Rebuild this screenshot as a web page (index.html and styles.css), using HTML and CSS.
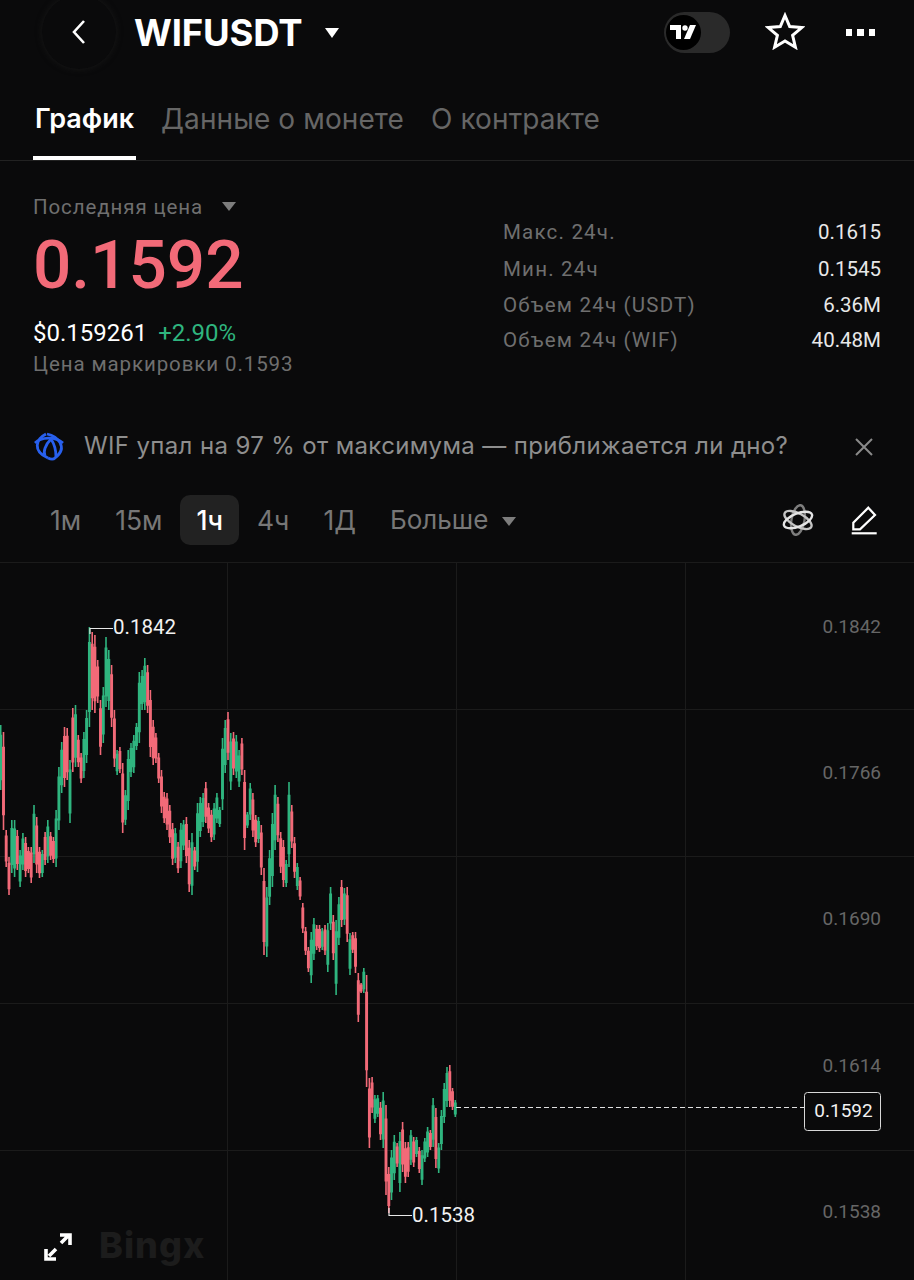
FILE: index.html
```html
<!DOCTYPE html>
<html lang="ru">
  <head>
    <meta charset="UTF-8" />
    <meta name="viewport" content="width=device-width, initial-scale=1.0" />
    <title>WIFUSDT</title>
    <link rel="stylesheet" href="styles.css" />
  </head>
  <body>
    <header class="topbar">
      <div class="back">
        <svg width="16" height="26" viewBox="0 0 16 26"><path d="M13 2 3 13l10 11" fill="none" stroke="#fff" stroke-width="2.6" /></svg>
      </div>
      <h1 class="symbol">WIFUSDT</h1>
      <span class="caret caret-white"></span>
      <div class="topbar-actions">
        <div class="toggle">
          <div class="toggle-knob">
            <svg width="26" height="15" viewBox="0 0 26 15">
              <path d="M0 0h11v14H6V5H0z" fill="#fff" />
              <circle cx="15" cy="3" r="2.7" fill="#fff" />
              <path d="M20 0h6l-6 14h-6z" fill="#fff" />
            </svg>
          </div>
        </div>
        <svg class="star" width="40" height="38" viewBox="0 0 40 38"><path d="M20 3.5 24.7 14.6 36.8 15.6 27.6 23.4 30.4 35.2 20 29 9.6 35.2 12.4 23.4 3.2 15.6 15.3 14.6Z" fill="none" stroke="#fff" stroke-width="3" stroke-linejoin="miter" /></svg>
        <div class="dots"><i></i><i></i><i></i></div>
      </div>
    </header>

    <nav class="tabs">
      <a class="tab tab-active">График</a>
      <a class="tab">Данные о монете</a>
      <a class="tab">О контракте</a>
    </nav>

    <section class="quote">
      <div class="quote-left">
        <div class="last-label">Последняя цена <span class="caret caret-gray"></span></div>
        <div class="last-price">0.1592</div>
        <div class="usd-row"><span class="usd">$0.159261</span> <span class="change">+2.90%</span></div>
        <div class="mark">Цена маркировки 0.1593</div>
      </div>
      <dl class="stats">
        <dt>Макс. 24ч.</dt><dd>0.1615</dd>
        <dt>Мин. 24ч</dt><dd>0.1545</dd>
        <dt>Объем 24ч (USDT)</dt><dd>6.36M</dd>
        <dt>Объем 24ч (WIF)</dt><dd>40.48M</dd>
      </dl>
    </section>

    <section class="news">
      <svg width="34" height="32" viewBox="0 0 34 32" fill="none" stroke="#2860ee" stroke-width="2.8">
        <path d="M13 3C3 8-1 20 15 27" />
        <path d="M14 3C24 5 36 16 22 27 20 29 17 28 15 27" />
        <path d="M2 12C8 6 22 5 30 12" />
        <path d="M18 8C12 14 10 21 12 25" />
        <path d="M18 8C22 14 23 20 23 26" />
      </svg>
      <p class="news-text">WIF упал на 97 % от максимума — приближается ли дно?</p>
      <svg class="news-close" width="20" height="20" viewBox="0 0 20 20"><path d="M2 2l16 16M18 2 2 18" stroke="#8a8a8a" stroke-width="2" /></svg>
    </section>

    <section class="periods">
      <span class="period">1м</span>
      <span class="period">15м</span>
      <span class="period period-active">1ч</span>
      <span class="period">4ч</span>
      <span class="period">1Д</span>
      <span class="period period-more">Больше <span class="caret caret-gray"></span></span>
      <div class="period-tools">
        <svg width="32" height="32" viewBox="0 0 32 32" fill="none" stroke-width="2.4">
          <ellipse cx="16" cy="16" rx="15" ry="6.5" transform="rotate(100 16 16)" stroke="#7d7d7d" />
          <ellipse cx="16" cy="16" rx="15" ry="6.5" transform="rotate(28 16 16)" stroke="#c4c4c4" />
          <ellipse cx="16" cy="16" rx="15" ry="6.5" transform="rotate(-22 16 16)" stroke="#e4e4e4" />
        </svg>
        <svg width="28" height="30" viewBox="0 0 28 30" fill="none" stroke="#fff" stroke-width="2.2">
          <path d="M18.3 2.7 25 10 10 24.3H3.3v-6.6Z" />
          <path d="M1.7 28.3h25" />
        </svg>
      </div>
    </section>

    <section class="chart">
      <svg id="chart-svg" width="914" height="718" viewBox="0 562 914 718">
        <path class="grid" d="M0 562.5H914M0 709.5H914M0 856.5H914M0 1003.5H914M0 1150.5H914M227.5 562V1280M456.5 562V1280M685.5 562V1280" />
        <g id="candles"></g>
        <path class="marker" d="M90 634V628.5H113" />
        <path class="marker" d="M389 1208V1215.5H412" />
        <text class="mark-label" x="113" y="634">0.1842</text>
        <text class="mark-label" x="412" y="1222">0.1538</text>
        <text class="axis-label" x="881" y="633">0.1842</text>
        <text class="axis-label" x="881" y="779">0.1766</text>
        <text class="axis-label" x="881" y="925">0.1690</text>
        <text class="axis-label" x="881" y="1072">0.1614</text>
        <text class="axis-label" x="881" y="1218">0.1538</text>
        <path class="last-line" d="M456 1107.5H804" />
        <rect class="last-box" x="804.5" y="1092.5" width="76" height="38" rx="3" />
        <text class="last-text" x="843.5" y="1117">0.1592</text>
        <path class="expand" d="M49 1256 56 1249M61 1243 68 1236M60 1235H70V1245M46 1249V1259H56" />
        <text class="watermark" x="99" y="1258">Bingx</text>
      </svg>
    </section>

    <script src="chart.js"></script>
  </body>
</html>
```

FILE: styles.css
```css
* {
  box-sizing: border-box;
  font-family: "Inter", "Liberation Sans", sans-serif;
}
html,
body {
  margin: 0;
  padding: 0;
  background-color: #0a0a0b;
  color: #fff;
  overflow: hidden;
}
body {
  width: 914px;
  height: 1280px;
}

.caret {
  display: inline-block;
  width: 0;
  height: 0;
  border-left: 7.5px solid transparent;
  border-right: 7.5px solid transparent;
  border-top: 10px solid #fff;
}
.caret-gray {
  border-left-width: 7px;
  border-right-width: 7px;
  border-top: 9px solid #7d7d7d;
  margin-left: 6px;
  vertical-align: 3px;
}

/* top bar */
.topbar {
  display: flex;
  align-items: center;
  height: 65px;
  padding-left: 42px;
}
.back {
  width: 74px;
  height: 74px;
  margin-top: -2px;
  margin-right: 18px;
  border-radius: 50%;
  box-shadow: 0 0 6px #181818;
  display: flex;
  align-items: center;
  justify-content: center;
}
.symbol {
  margin: 0 23px 0 0;
  font-size: 36.5px;
  font-weight: 700;
  letter-spacing: -0.2px;
}
.topbar-actions {
  margin-left: auto;
  display: flex;
  align-items: center;
  padding-right: 39px;
}
.toggle {
  width: 66px;
  height: 41px;
  border-radius: 21px;
  background-color: #2a2a2a;
  padding: 3px 2px;
  margin-right: 35px;
}
.toggle-knob {
  width: 35px;
  height: 35px;
  border-radius: 50%;
  background-color: #000;
  display: flex;
  align-items: center;
  justify-content: center;
}
.star {
  margin-right: 41px;
  margin-top: -3px;
}
.dots {
  display: flex;
  gap: 5px;
}
.dots i {
  width: 6.5px;
  height: 6.5px;
  background-color: #fff;
}

/* tabs */
.tabs {
  display: flex;
  gap: 25px;
  height: 96px;
  padding-left: 33px;
  border-bottom: 1px solid #222;
  align-items: flex-end;
}
.tab {
  font-size: 28px;
  letter-spacing: 0.1px;
  color: #666;
  height: 72px;
  line-height: 62px;
  padding: 0 1px;
}
.tab-active {
  color: #fff;
  font-size: 27px;
  font-weight: 600;
  letter-spacing: 0;
  padding: 0 2px;
  margin-right: -1px;
  border-bottom: 4px solid #fff;
}

/* quote */
.quote {
  display: flex;
  justify-content: space-between;
  padding: 34px 33px 0 33px;
  height: 252px;
}
.last-label {
  font-family: "Roboto", sans-serif;
  font-size: 20.5px;
  color: #6f6f6f;
  letter-spacing: 0.9px;
  line-height: 24px;
}
.last-label .caret {
  margin-left: 13px;
}
.last-price {
  font-family: "Roboto", sans-serif;
  font-size: 67.5px;
  font-weight: 500;
  color: #f26a78;
  line-height: 78px;
  margin-top: 7px;
}
.usd-row {
  font-family: "Roboto", sans-serif;
  font-size: 24px;
  line-height: 28px;
  margin-top: 15px;
}
.usd,
.change {
  font-family: inherit;
}
.change {
  color: #2fb57f;
  margin-left: 5px;
}
.mark {
  font-family: "Roboto", sans-serif;
  font-size: 20.5px;
  color: #6f6f6f;
  letter-spacing: 0.9px;
  line-height: 26px;
  margin-top: 4px;
}
.stats {
  display: grid;
  grid-template-columns: 1fr auto;
  grid-template-rows: 37px 37px 35px 36px;
  width: 378px;
  margin: 18px 0 0;
  font-size: 20.5px;
  align-items: center;
}
.stats dt {
  font-family: "Roboto", sans-serif;
  color: #6f6f6f;
  letter-spacing: 1.2px;
}
.stats dd {
  font-family: "Roboto", sans-serif;
  margin: 0;
  text-align: right;
  color: #e8e8e8;
}

/* news strip */
.news {
  display: flex;
  align-items: center;
  height: 70px;
  margin-top: -1px;
  padding: 0 40px 0 33px;
}
.news-text {
  margin: 0 0 4px 17px;
  font-size: 24px;
  letter-spacing: 0.36px;
  color: #8e8e8e;
  white-space: nowrap;
}
.news-close {
  margin-left: auto;
}

/* period selector */
.periods {
  display: flex;
  align-items: center;
  height: 81px;
  padding: 0 36px 4px 34px;
  gap: 2px;
  border-bottom: 1px solid #1d1d1d;
}
.period {
  font-size: 26.5px;
  color: #777;
  padding: 0 16px;
  height: 50px;
  line-height: 50px;
  border-radius: 10px;
}
.period-more {
  font-size: 26px;
}
.period-active {
  color: #fff;
  font-weight: 500;
  background-color: #222;
}
.period-tools {
  margin-left: auto;
  display: flex;
  align-items: center;
  gap: 36px;
}

/* chart */
.chart {
  margin-top: -1px;
}
#chart-svg {
  display: block;
}
.grid {
  stroke: #1b1b1b;
  stroke-width: 1;
  fill: none;
}
.marker {
  stroke: #e8e8e8;
  stroke-width: 1.2;
  fill: none;
}
.mark-label,
.axis-label,
.last-text {
  font-family: "Roboto", sans-serif;
}
.mark-label {
  font-size: 20.5px;
  fill: #f2f2f2;
}
.axis-label {
  font-size: 19px;
  fill: #666;
  text-anchor: end;
}
.last-line {
  stroke: #e0e0e0;
  stroke-width: 1;
  stroke-dasharray: 5 3;
}
.last-box {
  fill: #0a0a0b;
  stroke: #d8d8d8;
  stroke-width: 1;
}
.last-text {
  font-size: 19px;
  fill: #f2f2f2;
  text-anchor: middle;
}
.expand {
  stroke: #fff;
  stroke-width: 3.6;
  fill: none;
}
.watermark {
  font-size: 36px;
  font-weight: 800;
  fill: #1c1c1c;
  letter-spacing: 1px;
}
.wick-g,
.body-g {
  stroke: #2fb57f;
}
.wick-r,
.body-r {
  stroke: #f26a78;
}
.wick-g,
.wick-r {
  stroke-width: 1.6;
}
.body-g,
.body-r {
  stroke-width: 2.9;
}
```

FILE: chart.js
```javascript
// colour + wick top,bottom in page pixels, oldest first
const data = `g725,790 r732,830 r830,867 r857,895 g820,873 g820,877 r830,870 g850,887 g833,870 r837,877
r847,873 r847,883 g805,863 r817,873 r847,878 g850,877 r832,865 g820,863 r832,860 r837,863
g810,867 g767,830 g742,793 r727,787 r728,780 g760,823 r708,772 g705,767 r735,767 r753,783
g732,778 g710,763 g627,727 r632,710 r635,713 r660,703 r700,755 g687,743 g637,707 g650,710
r665,727 r710,767 g750,775 r747,773 r763,833 g790,825 g750,810 g743,777 g735,773 g723,750
g672,743 g670,710 g658,710 r665,713 r690,757 r720,765 r733,763 r753,783 r770,813 r792,823
r793,830 r805,843 r823,865 g828,863 r842,873 g823,868 g820,850 r817,863 r840,892 g833,895
r847,870 g803,872 g797,837 g793,827 r782,823 r803,833 r810,842 g803,840 g793,823 g807,827
g738,810 g720,773 r712,760 g733,790 r732,775 g735,778 g750,787 r738,775 r770,850 g812,828
g783,820 r793,837 r815,847 g817,843 r825,875 r868,955 g887,957 g850,905 g813,887 g785,850
r797,842 r832,873 r840,887 g860,887 g782,867 r805,848 r837,878 g863,890 r877,900 r903,933
r927,955 r947,972 g932,983 g918,960 r925,950 r925,952 g928,950 r925,955 g923,972 g887,930
r915,960 g920,995 g897,945 r880,927 g888,925 r887,942 g933,975 r932,953 r932,973 r973,1022
r983,993 g968,993 r975,1087 r1078,1148 r1077,1113 g1095,1123 g1095,1117 r1102,1140 g1092,1148 r1105,1195
r1167,1213 g1150,1200 g1135,1180 r1143,1167 g1132,1192 r1122,1172 r1142,1183 r1142,1177 g1130,1165 r1137,1167
g1137,1157 r1147,1173 g1150,1185 g1138,1162 g1127,1157 r1130,1150 g1098,1147 r1108,1168 g1143,1173 g1110,1150
g1083,1123 g1067,1107 r1065,1107 r1088,1110 g1100,1117`;

const candles = data.split(/\s+/);
const step = (455.3 - 0.7) / (candles.length - 1);
const paths = { "wick-g": "", "wick-r": "", "body-g": "", "body-r": "" };

candles.forEach((c, i) => {
  const color = c[0];
  const [top, bottom] = c.slice(1).split(",").map(Number);
  const x = (0.7 + i * step).toFixed(1);
  const inset = (bottom - top) * 0.15;
  paths["wick-" + color] += `M${x} ${top}V${bottom}`;
  paths["body-" + color] += `M${x} ${top + inset}V${bottom - inset}`;
});

const group = document.getElementById("candles");
for (const name in paths) {
  const p = document.createElementNS("http://www.w3.org/2000/svg", "path");
  p.setAttribute("class", name);
  p.setAttribute("d", paths[name]);
  group.appendChild(p);
}
```
